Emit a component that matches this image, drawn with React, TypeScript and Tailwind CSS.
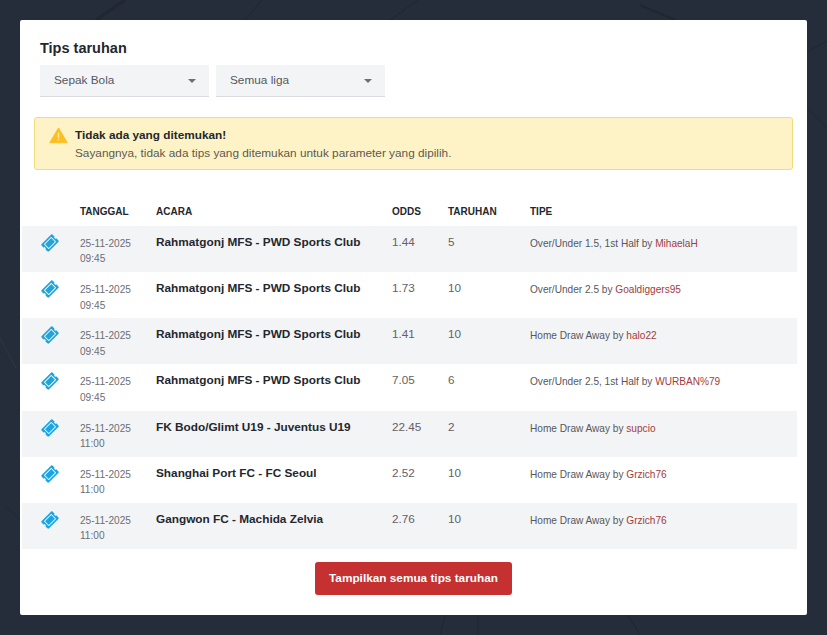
import React from "react";

const rows = [
  ["25-11-2025", "09:45", "Rahmatgonj MFS - PWD Sports Club", "1.44", "5", "Over/Under 1.5, 1st Half", "MihaelaH"],
  ["25-11-2025", "09:45", "Rahmatgonj MFS - PWD Sports Club", "1.73", "10", "Over/Under 2.5", "Goaldiggers95"],
  ["25-11-2025", "09:45", "Rahmatgonj MFS - PWD Sports Club", "1.41", "10", "Home Draw Away", "halo22"],
  ["25-11-2025", "09:45", "Rahmatgonj MFS - PWD Sports Club", "7.05", "6", "Over/Under 2.5, 1st Half", "WURBAN%79"],
  ["25-11-2025", "11:00", "FK Bodo/Glimt U19 - Juventus U19", "22.45", "2", "Home Draw Away", "supcio"],
  ["25-11-2025", "11:00", "Shanghai Port FC - FC Seoul", "2.52", "10", "Home Draw Away", "Grzich76"],
  ["25-11-2025", "11:00", "Gangwon FC - Machida Zelvia", "2.76", "10", "Home Draw Away", "Grzich76"],
];

function Ticket() {
  return (
    <svg width="16" height="14" viewBox="0 0 576 512" className="block -rotate-45">
      <path
        d="M128 160h320v192H128V160zm400 96c0 26.51 21.49 48 48 48v96c0 26.51-21.49 48-48 48H48c-26.51 0-48-21.49-48-48v-96c26.51 0 48-21.49 48-48s-21.49-48-48-48v-96c0-26.51 21.49-48 48-48h480c26.51 0 48 21.49 48 48v96c-26.51 0-48 21.49-48 48zm-48-104c0-13.255-10.745-24-24-24H120c-13.255 0-24 10.745-24 24v208c0 13.255 10.745 24 24 24h336c13.255 0 24-10.745 24-24V152z"
        fill="#1ba6e2"
      />
    </svg>
  );
}

function Select({ label }: { label: string }) {
  return (
    <div className="w-[169px] h-[32px] bg-[#f3f4f6] border-b border-[#d9dbe0] flex items-center justify-between pl-[14px] pr-[13px] text-[11.8px] text-[#55585e]">
      <span>{label}</span>
      <span className="w-0 h-0 border-x-[4.5px] border-x-transparent border-t-[4.5px] border-t-[#6b6e75]" />
    </div>
  );
}

export default function App() {
  return (
    <div className="relative h-[635px] overflow-hidden bg-[#252c3a] p-5 font-['Liberation_Sans',Arial,sans-serif]">
      <svg className="absolute inset-0" width="827" height="635" viewBox="0 0 827 635" fill="none" stroke="#202633" strokeWidth="1">
        <path d="M96 20L125 0" strokeWidth="3" />
        <path d="M245 20L262 0" />
        <path d="M390 20L418 0" />
        <path d="M640 5L675 20" strokeWidth="2" />
        <path d="M807 52L827 41" />
        <path d="M807 108L827 128" />
        <path d="M0 338L16 368" stroke="#2f3746" />
        <path d="M5 505L20 520" />
        <path d="M445 615L440 635" />
        <path d="M478 615L478 635" />
        <path d="M628 615L640 635" />
      </svg>
      <div className="relative h-[595px] bg-white rounded-[2px] overflow-hidden">
        <h2 className="ml-5 pt-[19px] text-[14.5px] leading-[18px] font-bold text-[#24272e]">Tips taruhan</h2>
        <div className="flex gap-[7px] ml-5 mt-[8px]">
          <Select label="Sepak Bola" />
          <Select label="Semua liga" />
        </div>
        <div className="ml-[14px] mr-[14px] mt-[20px] h-[53px] bg-[#fef3c7] border border-[#f0dc7a] rounded-[3px] flex items-start pl-[14px] pt-[9px]">
          <svg width="19" height="17" viewBox="0 0 20 18" className="mr-[7px] shrink-0">
            <path d="M10 1L19.3 16.6H0.7z" fill="#fbbf24" stroke="#fbbf24" strokeWidth="1" strokeLinejoin="round" />
            <rect x="9.2" y="6" width="1.6" height="5.5" fill="#fff" opacity="0.6" />
            <rect x="9.2" y="12.6" width="1.6" height="1.6" fill="#fff" opacity="0.6" />
          </svg>
          <div>
            <div className="text-[11.8px] leading-[17px] font-bold text-[#24272e]">Tidak ada yang ditemukan!</div>
            <div className="text-[11.8px] leading-[18px] text-[#5c5a50]">Sayangnya, tidak ada tips yang ditemukan untuk parameter yang dipilih.</div>
          </div>
        </div>
        <table className="ml-[2px] mt-[27px] w-[775px] table-fixed border-collapse">
          <colgroup>
            <col className="w-[58px]" />
            <col className="w-[76px]" />
            <col className="w-[236px]" />
            <col className="w-[56px]" />
            <col className="w-[82px]" />
            <col />
          </colgroup>
          <thead>
            <tr className="h-[29px] text-left text-[10px] text-[#24272e]">
              <th />
              <th className="font-bold">TANGGAL</th>
              <th className="font-bold">ACARA</th>
              <th className="font-bold">ODDS</th>
              <th className="font-bold">TARUHAN</th>
              <th className="font-bold">TIPE</th>
            </tr>
          </thead>
          <tbody>
            {rows.map((r, i) => (
              <tr key={i} className={`h-[46.14px] ${i % 2 === 0 ? "bg-[#f3f4f6]" : "bg-white"}`}>
                <td className="align-top pl-[20px] pt-[10px]"><Ticket /></td>
                <td className="align-top pt-[10px] text-[10.1px] leading-[15.4px] text-[#6b6e75]">{r[0]}<br />{r[1]}</td>
                <td className="align-top pt-[7px] text-[11.8px] leading-[18px] font-bold text-[#24272e] whitespace-nowrap">{r[2]}</td>
                <td className="align-top pt-[7px] text-[11.7px] leading-[17px] text-[#5f6268]">{r[3]}</td>
                <td className="align-top pt-[7px] text-[11.7px] leading-[17px] text-[#5f6268]">{r[4]}</td>
                <td className="align-top pt-[9px] text-[10.1px] leading-[17px] text-[#55585e] whitespace-nowrap">{r[5]} by <a className="text-[#a23c3c]">{r[6]}</a></td>
              </tr>
            ))}
          </tbody>
        </table>
        <div className="flex justify-center mt-[13px]">
          <button className="h-[33px] w-[197px] bg-[#c53030] rounded-[3px] text-white text-[11.8px] font-bold">Tampilkan semua tips taruhan</button>
        </div>
      </div>
    </div>
  );
}
